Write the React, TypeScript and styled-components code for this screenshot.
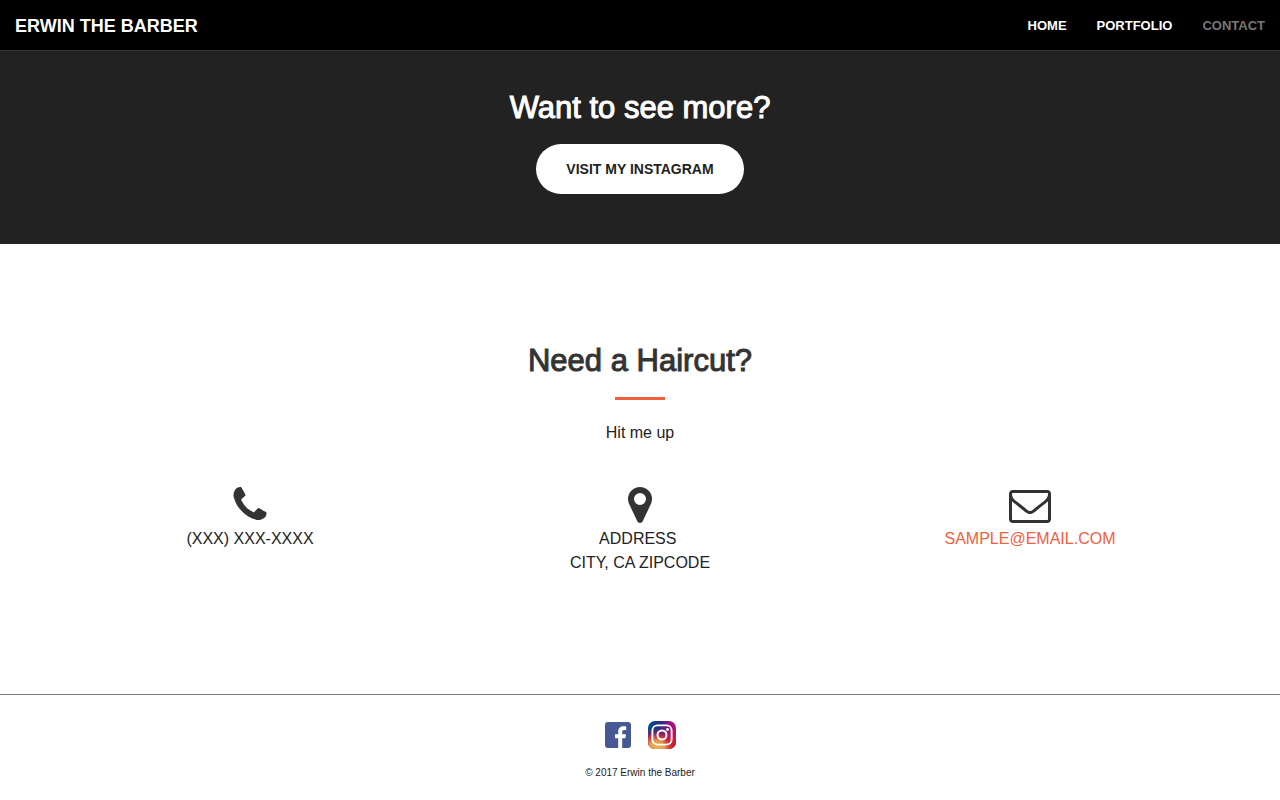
import React from "react";
import styled, { createGlobalStyle } from "styled-components";

const GlobalStyle = createGlobalStyle`
  *, *::before, *::after { box-sizing: border-box; }
  body {
    margin: 0;
    background: #fff;
    color: #222;
    font-family: "Helvetica Neue", "Liberation Sans", Arial, sans-serif;
    font-size: 16px;
    line-height: 24px;
  }
`;

const Header = styled.header`
  display: flex;
  align-items: center;
  justify-content: space-between;
  height: 51px;
  padding: 2px 15px 0;
  background: #000;
  border-bottom: 1px solid #333;
`;

const Brand = styled.a`
  color: #fff;
  font-size: 18px;
  font-weight: 700;
  line-height: 20px;
  text-decoration: none;
  text-transform: uppercase;
`;

const Nav = styled.nav`
  display: flex;
  gap: 30px;
`;

const NavLink = styled.a<{ $active?: boolean }>`
  color: ${(p) => (p.$active ? "#777" : "#fff")};
  font-size: 13px;
  font-weight: 700;
  line-height: 20px;
  text-decoration: none;
  text-transform: uppercase;
`;

const Promo = styled.section`
  display: flex;
  flex-direction: column;
  align-items: center;
  gap: 19px;
  padding: 40px 15px 50px;
  background: #222;
  color: #fff;
`;

const Heading = styled.h2`
  margin: 0;
  font-size: 31px;
  font-weight: 400;
  line-height: 34px;
  text-align: center;
  -webkit-text-stroke: 1px currentColor;
`;

const PillButton = styled.button`
  height: 50px;
  padding: 0 30px;
  border: 0;
  border-radius: 25px;
  background: #fff;
  color: #222;
  font-family: inherit;
  font-size: 14px;
  font-weight: 700;
  line-height: 20px;
  text-transform: uppercase;
  cursor: pointer;
`;

const Contact = styled.section`
  display: flex;
  flex-direction: column;
  align-items: center;
  padding: 100px 0 119px;
  color: #333;
`;

const Divider = styled.hr`
  width: 50px;
  height: 3px;
  margin: 19px 0 21px;
  border: 0;
  background: #f05f40;
`;

const Lead = styled.p`
  margin: 0 0 39px;
  color: #222;
`;

const Columns = styled.div`
  display: grid;
  grid-template-columns: repeat(3, 1fr);
  width: 100%;
  max-width: 1170px;
`;

const Column = styled.div`
  display: flex;
  flex-direction: column;
  align-items: center;
  gap: 1px;
  text-align: center;
`;

const Icon = styled.svg`
  width: 42px;
  height: 42px;
  fill: #333;
`;

const Detail = styled.p`
  margin: 0;
  color: #222;
`;

const MailLink = styled.a`
  color: #f05f40;
  text-decoration: none;
`;

const Footer = styled.footer`
  display: flex;
  flex-direction: column;
  align-items: center;
  padding: 25px 0 18px;
  border-top: 1px solid #777;
`;

const Social = styled.div`
  display: flex;
  gap: 14px;
`;

const SocialLink = styled.a`
  display: block;
  height: 30px;

  svg {
    display: block;
    width: 30px;
    height: 30px;
  }
`;

const Copyright = styled.small`
  margin-top: 15px;
  font-size: 10px;
  line-height: 16px;
`;

const PHONE =
  "M1600 1240q0 27-10 70.5t-21 68.5q-21 50-122 106-94 51-186 51-27 0-53-3.5t-57.5-12.5-47-14.5-55.5-20.5-49-18q-98-35-175-83-127-79-264-216t-216-264q-48-77-83-175-3-9-18-49t-20.5-55.5-14.5-47-12.5-57.5-3.5-53q0-92 51-186 56-101 106-122 25-11 68.5-21t70.5-10q14 0 21 3 18 6 53 76 11 19 30 54t35 63.5 31 53.5q3 4 17.5 25t21.5 35.5 7 28.5q0 20-28.5 50t-62 55-62 53-28.5 46q0 9 5 22.5t8.5 20.5 14 24 11.5 19q76 137 174 235t235 174q2 1 19 11.5t24 14 20.5 8.5 22.5 5q18 0 46-28.5t53-62 55-62 50-28.5q14 0 28.5 7t35.5 21.5 25 17.5q25 15 53.5 31t63.5 35 54 30q70 35 76 53 3 7 3 21z";
const MARKER =
  "M1152 640q0-106-75-181t-181-75-181 75-75 181 75 181 181 75 181-75 75-181zm256 0q0 109-33 179l-364 774q-16 33-47.5 52t-67.5 19-67.5-19-46.5-52l-365-774q-33-70-33-179 0-212 150-362t362-150 362 150 150 362z";
const ENVELOPE =
  "M1664 1504v-768q-32 36-69 66-268 206-426 338-51 43-83 67t-86.5 48.5-102.5 24.5h-2q-48 0-102.5-24.5t-86.5-48.5-83-67q-158-132-426-338-37-30-69-66v768q0 13 9.5 22.5t22.5 9.5h1472q13 0 22.5-9.5t9.5-22.5zm0-1051v-24.5l-.5-13-3-12.5-5.5-9-9-7.5-14-2.5h-1472q-13 0-22.5 9.5t-9.5 22.5q0 168 147 284 193 152 401 317 6 5 35 29.5t46 37.5 44.5 31.5 50.5 27.5 43 9h2q20 0 43-9t50.5-27.5 44.5-31.5 46-37.5 35-29.5q208-165 401-317 54-43 100.5-115.5t46.5-131.5zm128-37v1088q0 66-47 113t-113 47h-1472q-66 0-113-47t-47-113v-1088q0-66 47-113t113-47h1472q66 0 113 47t47 113z";

function ContactIcon({ path }: { path: string }) {
  return (
    <Icon viewBox="0 0 1792 1792" aria-hidden="true">
      <path d={path} />
    </Icon>
  );
}

function FacebookLogo() {
  return (
    <svg viewBox="0 0 30 30" aria-hidden="true">
      <rect x="2" y="2" width="26" height="26" rx="3" fill="#475993" />
      <path
        d="M15.200 28V18.300H12v-4h3.200v-2.500c0-3.600 2.200-5.500 5.300-5.500 1.300 0 2.200.1 2.700.2v3.500h-1.900c-1.700 0-2.100.9-2.100 2v2.300h3.800l-.6 4h-3.200V28z"
        fill="#fff"
      />
    </svg>
  );
}

function InstagramLogo() {
  return (
    <svg viewBox="0 0 30 30" aria-hidden="true">
      <defs>
        <linearGradient id="ig-top" x1="0" y1="0" x2="1" y2="0">
          <stop offset="0" stopColor="#00498f" />
          <stop offset="0.45" stopColor="#2a2b85" />
          <stop offset="0.8" stopColor="#a3137f" />
          <stop offset="1" stopColor="#a8127c" />
        </linearGradient>
        <linearGradient id="ig-fade" x1="0" y1="0" x2="0" y2="1">
          <stop offset="0.25" stopColor="#d0173f" stopOpacity="0" />
          <stop offset="0.7" stopColor="#d0173f" />
          <stop offset="1" stopColor="#c8232c" />
        </linearGradient>
        <radialGradient id="ig-glow" cx="0.3" cy="1" r="0.6">
          <stop offset="0" stopColor="#eab552" />
          <stop offset="0.5" stopColor="#e39a4c" />
          <stop offset="1" stopColor="#d8383c" stopOpacity="0" />
        </radialGradient>
      </defs>
      <rect x="1" y="1" width="28" height="28" rx="7" fill="url(#ig-top)" />
      <rect x="1" y="1" width="28" height="28" rx="7" fill="url(#ig-fade)" />
      <rect x="1" y="1" width="28" height="28" rx="7" fill="url(#ig-glow)" />
      <rect x="5.400" y="5.400" width="19.200" height="19.200" rx="5" fill="none" stroke="#fff" strokeWidth="1.900" />
      <circle cx="15" cy="15" r="4.500" fill="none" stroke="#fff" strokeWidth="2" />
      <circle cx="20.500" cy="9.500" r="1.400" fill="#fff" />
    </svg>
  );
}

export default function App() {
  return (
    <>
      <GlobalStyle />
      <Header>
        <Brand href="#">Erwin the Barber</Brand>
        <Nav>
          <NavLink href="#home">Home</NavLink>
          <NavLink href="#portfolio">Portfolio</NavLink>
          <NavLink href="#contact" $active aria-current="page">
            Contact
          </NavLink>
        </Nav>
      </Header>
      <main>
        <Promo>
          <Heading>Want to see more?</Heading>
          <PillButton type="button">Visit my Instagram</PillButton>
        </Promo>
        <Contact id="contact">
          <Heading>Need a Haircut?</Heading>
          <Divider />
          <Lead>Hit me up</Lead>
          <Columns>
            <Column>
              <ContactIcon path={PHONE} />
              <Detail>(XXX) XXX-XXXX</Detail>
            </Column>
            <Column>
              <ContactIcon path={MARKER} />
              <Detail>
                ADDRESS&nbsp;
                <br />
                CITY, CA ZIPCODE
              </Detail>
            </Column>
            <Column>
              <ContactIcon path={ENVELOPE} />
              <Detail>
                <MailLink href="mailto:sample@email.com">SAMPLE@EMAIL.COM</MailLink>
              </Detail>
            </Column>
          </Columns>
        </Contact>
      </main>
      <Footer>
        <Social>
          <SocialLink href="#facebook" aria-label="Facebook">
            <FacebookLogo />
          </SocialLink>
          <SocialLink href="#instagram" aria-label="Instagram">
            <InstagramLogo />
          </SocialLink>
        </Social>
        <Copyright>© 2017 Erwin the Barber</Copyright>
      </Footer>
    </>
  );
}
